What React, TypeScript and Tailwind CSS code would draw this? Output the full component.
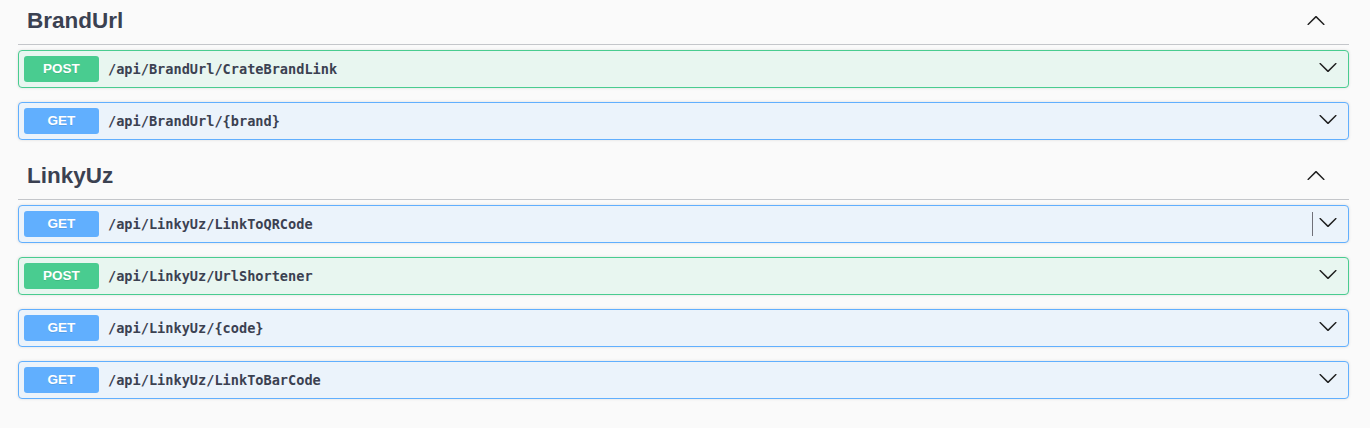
const ops = [
  {
    tag: "BrandUrl",
    items: [
      { method: "POST", path: "/api/BrandUrl/CrateBrandLink" },
      { method: "GET", path: "/api/BrandUrl/{brand}" },
    ],
  },
  {
    tag: "LinkyUz",
    items: [
      { method: "GET", path: "/api/LinkyUz/LinkToQRCode", divider: true },
      { method: "POST", path: "/api/LinkyUz/UrlShortener" },
      { method: "GET", path: "/api/LinkyUz/{code}" },
      { method: "GET", path: "/api/LinkyUz/LinkToBarCode" },
    ],
  },
];

function Chevron({ up, className }: { up?: boolean; className?: string }) {
  return (
    <svg
      width="20"
      height="20"
      viewBox="0 0 20 20"
      className={className}
      style={up ? { transform: "rotate(180deg)" } : undefined}
      fill="#1f1f1f"
    >
      <path d="M17.418 6.109c.272-.268.709-.268.979 0s.271.701 0 .969l-7.908 7.83c-.27.268-.707.268-.979 0l-7.908-7.83c-.27-.268-.27-.701 0-.969.271-.268.709-.268.979 0L10 13.25l7.418-7.141z" />
    </svg>
  );
}

function OpBlock({ method, path, divider }: { method: string; path: string; divider?: boolean }) {
  const post = method === "POST";
  return (
    <div
      className={
        "flex h-[37.5px] items-center rounded-[4px] border pl-[5px] pr-[10px] shadow-[0_0_3px_rgba(0,0,0,0.12)] " +
        (post ? "border-[#49cc90] bg-[#e8f6f0]" : "border-[#61affe] bg-[#ebf3fb]")
      }
    >
      <span
        className={
          "flex h-[26px] w-[75px] items-center justify-center rounded-[3px] text-[13.5px] font-bold text-white [text-shadow:0_1px_0_rgba(0,0,0,0.1)] " +
          (post ? "bg-[#49cc90]" : "bg-[#61affe]")
        }
        style={{ fontFamily: '"Liberation Sans", Arial, sans-serif' }}
      >
        {method}
      </span>
      <span
        className="ml-[9px] flex-1 text-[13.6px] font-bold text-[#3b4151]"
        style={{ fontFamily: '"DejaVu Sans Mono", "Liberation Mono", monospace' }}
      >
        {path}
      </span>
      {divider && <div className="mr-[5px] h-[24px] w-px bg-[#707078]" />}
      <Chevron className="mb-[3px]" />
    </div>
  );
}

export default function App() {
  return (
    <div
      className="min-h-screen bg-[#fafafa] pl-[18px] pr-[21px]"
      style={{ fontFamily: '"Liberation Sans", Arial, sans-serif' }}
    >
      {ops.map((group) => (
        <section key={group.tag} className="mb-[15.5px]">
          <div className="flex h-[45px] items-start border-b border-[#c4c6ca] pl-[9px] pt-[9.5px]">
            <h3 className="flex-1 text-[22.5px] font-bold leading-[22px] text-[#3b4151]">{group.tag}</h3>
            <Chevron up className="mr-[23px] mt-[1.5px]" />
          </div>
          <div className="flex flex-col gap-[14.5px] pt-[5px]">
            {group.items.map((op) => (
              <OpBlock key={op.path} {...op} />
            ))}
          </div>
        </section>
      ))}
    </div>
  );
}
